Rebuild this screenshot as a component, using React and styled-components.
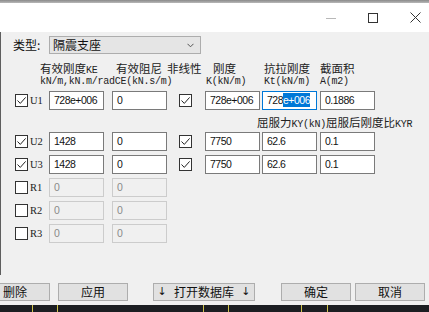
import React from "react";
import styled, { createGlobalStyle } from "styled-components";

const CJK = `"Noto Sans CJK SC", "Noto Sans", sans-serif`;

const Global = createGlobalStyle`
  html, body { margin: 0; padding: 0; background: #f0f0f0; }
  body { font-family: ${CJK}; color: #111; }
  * { box-sizing: border-box; }
`;

const Window = styled.div`
  width: 429px;
  height: 312px;
  overflow: hidden;
  display: flex;
  flex-direction: column;
  background: #f0f0f0;
`;

const TopStrip = styled.div`
  height: 3px;
  background: linear-gradient(#8a8a8a, #b8b8b8);
`;

const TitleBar = styled.div`
  height: 29px;
  background: #ffffff;
  display: flex;
  align-items: center;
  justify-content: flex-end;
  gap: 32px;
  padding-right: 8px;
`;

const Client = styled.div`
  flex: 1;
  display: flex;
  flex-direction: column;
`;

const Body = styled.div`
  height: 243px;
  border-left: 1px solid #5e5e5e;
  display: flex;
  flex-direction: column;
`;

const TypeRow = styled.div`
  margin-top: 4px;
  height: 18px;
  display: flex;
  align-items: center;
  padding-left: 12px;
`;

const TypeLabel = styled.span`
  width: 36px;
  font-size: 12px;
  line-height: 18px;
  color: #111;
`;

const Combo = styled.div`
  width: 152px;
  height: 18px;
  background: #e5e5e5;
  border: 1px solid #adadad;
  display: flex;
  align-items: center;
  justify-content: space-between;
  padding: 0 6px 0 3px;
  font-size: 12px;
  line-height: 16px;
`;

const HeaderLine = styled.div`
  margin-top: ${(p) => p.$top}px;
  height: ${(p) => p.$h}px;
  line-height: ${(p) => p.$h}px;
  display: flex;
  padding-left: 39px;
  font-size: 11.5px;
  white-space: nowrap;
  color: #222;
`;

const HeadCell = styled.span`
  flex: 0 0 ${(p) => (p.$w ? `${p.$w}px` : "auto")};
  white-space: nowrap;
`;

const Lat = styled.span`
  font-family: "Liberation Mono", monospace;
  font-size: 10px;
  letter-spacing: -0.25px;
`;

const Row = styled.div`
  margin-top: ${(p) => p.$top}px;
  height: 19px;
  display: flex;
  align-items: center;
  padding-left: 14px;
`;

const RowHead = styled.div`
  width: 34px;
  display: flex;
  align-items: center;
`;

const RowName = styled.span`
  margin-left: 2px;
  font-family: "Liberation Serif", serif;
  font-size: 10.5px;
  color: #222;
`;

const CheckCol = styled.div`
  width: 38px;
  display: flex;
  align-items: center;
  padding-left: 12px;
`;

const Box = styled.div`
  width: 13px;
  height: 13px;
  border: 1px solid #333;
  background: #fff;
  display: flex;
  align-items: center;
  justify-content: center;
`;

const Field = styled.div`
  width: 55px;
  height: 19px;
  margin-left: ${(p) => p.$ml || 0}px;
  border: 1px solid ${(p) => (p.$focus ? "#0078d7" : p.$disabled ? "#cccccc" : "#7a7a7a")};
  background: ${(p) => (p.$disabled ? "#f0f0f0" : "#ffffff")};
  color: ${(p) => (p.$disabled ? "#8a8a8a" : "#111")};
  padding-left: 4px;
  font-family: "Liberation Sans", Arial, sans-serif;
  font-size: 10.5px;
  letter-spacing: -0.5px;
  line-height: 17px;
  white-space: nowrap;
  overflow: hidden;
`;

const Sel = styled.span`
  background: #0078d7;
  color: #fff;
  padding: 1px 0;
`;

const KYLabel = styled.div`
  margin-top: 6px;
  height: 13px;
  line-height: 13px;
  padding-left: 256px;
  font-size: 11.5px;
  white-space: nowrap;
  color: #222;
`;

const ButtonBar = styled.div`
  margin-top: 8px;
  height: 18px;
  display: flex;
`;

const Button = styled.div`
  flex: 0 0 ${(p) => p.$w}px;
  margin-left: ${(p) => p.$ml}px;
  height: 18px;
  background: #e1e1e1;
  border: 1px solid #adadad;
  display: flex;
  align-items: center;
  justify-content: ${(p) => (p.$spread ? "space-around" : "center")};
  font-size: 12px;
  line-height: 16px;
  color: #111;
`;

const Arrow = styled.span`
  font-family: "DejaVu Sans", sans-serif;
  font-size: 11px;
`;

const Check = ({ on }) => (
  <Box>
    {on && (
      <svg width="11" height="11" viewBox="0 0 11 11">
        <polyline points="1.5,5.5 4.3,8.4 9.6,2.4" fill="none" stroke="#222" strokeWidth="1" />
      </svg>
    )}
  </Box>
);

const Minimize = () => (
  <svg width="10" height="10" viewBox="0 0 10 10">
    <line x1="0" y1="5.5" x2="10" y2="5.5" stroke="#b8b8b8" strokeWidth="1" />
  </svg>
);
const Maximize = () => (
  <svg width="10" height="10" viewBox="0 0 10 10">
    <rect x="0.5" y="0.5" width="9" height="9" fill="none" stroke="#333" strokeWidth="1" />
  </svg>
);
const Close = () => (
  <svg width="11" height="11" viewBox="0 0 11 11">
    <path d="M0.5 0.5 L10.5 10.5 M10.5 0.5 L0.5 10.5" stroke="#333" strokeWidth="1" />
  </svg>
);

const DarkStrip = () => (
  <svg width="429" height="7" viewBox="0 0 429 7" style={{ display: "block" }}>
    <rect width="429" height="7" fill="#1c1e22" />
    {[32, 57, 203, 228, 301, 327].map((x) => (
      <line key={x} x1={x + 0.5} y1="0" x2={x + 0.5} y2="7" stroke="#cfc24a" strokeWidth="1" />
    ))}
  </svg>
);

const uRows = [
  { name: "U2", k: "1428", k3: "7750", ky: "62.6", r: "0.1" },
  { name: "U3", k: "1428", k3: "7750", ky: "62.6", r: "0.1" },
];

export default function App() {
  return (
    <Window>
      <Global />
      <TopStrip />
      <TitleBar>
        <Minimize />
        <Maximize />
        <Close />
      </TitleBar>
      <Client>
        <Body>
          <TypeRow>
            <TypeLabel>类型:</TypeLabel>
            <Combo>
              <span>隔震支座</span>
              <svg width="7" height="5" viewBox="0 0 7 5">
                <polyline points="0.5,0.8 3.5,3.8 6.5,0.8" fill="none" stroke="#555" strokeWidth="1" />
              </svg>
            </Combo>
          </TypeRow>
          <HeaderLine $top={8} $h={12}>
            <HeadCell $w={76}>有效刚度<Lat>KE</Lat></HeadCell>
            <HeadCell $w={51}>有效阻尼</HeadCell>
            <HeadCell $w={46}>非线性</HeadCell>
            <HeadCell $w={51}>刚度</HeadCell>
            <HeadCell $w={56}>抗拉刚度</HeadCell>
            <HeadCell>截面积</HeadCell>
          </HeaderLine>
          <HeaderLine $top={0} $h={11}>
            <HeadCell $w={166}><Lat>kN/m,kN.m/radCE(kN.s/m)</Lat></HeadCell>
            <HeadCell $w={58}><Lat>K(kN/m)</Lat></HeadCell>
            <HeadCell $w={56}><Lat>Kt(kN/m)</Lat></HeadCell>
            <HeadCell><Lat>A(m2)</Lat></HeadCell>
          </HeaderLine>
          <Row $top={6}>
            <RowHead>
              <Check on />
              <RowName>U1</RowName>
            </RowHead>
            <Field>728e+006</Field>
            <Field $ml={8}>0</Field>
            <CheckCol>
              <Check on />
            </CheckCol>
            <Field>728e+006</Field>
            <Field $ml={2} $focus>
              728<Sel>e+006</Sel>
            </Field>
            <Field $ml={3}>0.1886</Field>
          </Row>
          <KYLabel>
            屈服力<Lat>KY(kN)</Lat>屈服后刚度比<Lat>KYR</Lat>
          </KYLabel>
          {uRows.map((r, i) => (
            <Row key={r.name} $top={i === 0 ? 3 : 4}>
              <RowHead>
                <Check on />
                <RowName>{r.name}</RowName>
              </RowHead>
              <Field>{r.k}</Field>
              <Field $ml={8}>0</Field>
              <CheckCol>
                <Check on />
              </CheckCol>
              <Field>{r.k3}</Field>
              <Field $ml={2}>{r.ky}</Field>
              <Field $ml={3}>{r.r}</Field>
            </Row>
          ))}
          {["R1", "R2", "R3"].map((n) => (
            <Row key={n} $top={4}>
              <RowHead>
                <Check />
                <RowName>{n}</RowName>
              </RowHead>
              <Field $disabled>0</Field>
              <Field $disabled $ml={8}>0</Field>
            </Row>
          ))}
        </Body>
        <ButtonBar>
          <Button $w={70} $ml={-20}>删除</Button>
          <Button $w={70} $ml={8}>应用</Button>
          <Button $w={102} $ml={25} $spread>
            <Arrow>↓</Arrow>
            <span>打开数据库</span>
            <Arrow>↓</Arrow>
          </Button>
          <Button $w={70} $ml={26}>确定</Button>
          <Button $w={70} $ml={4}>取消</Button>
        </ButtonBar>
      </Client>
      <DarkStrip />
    </Window>
  );
}
